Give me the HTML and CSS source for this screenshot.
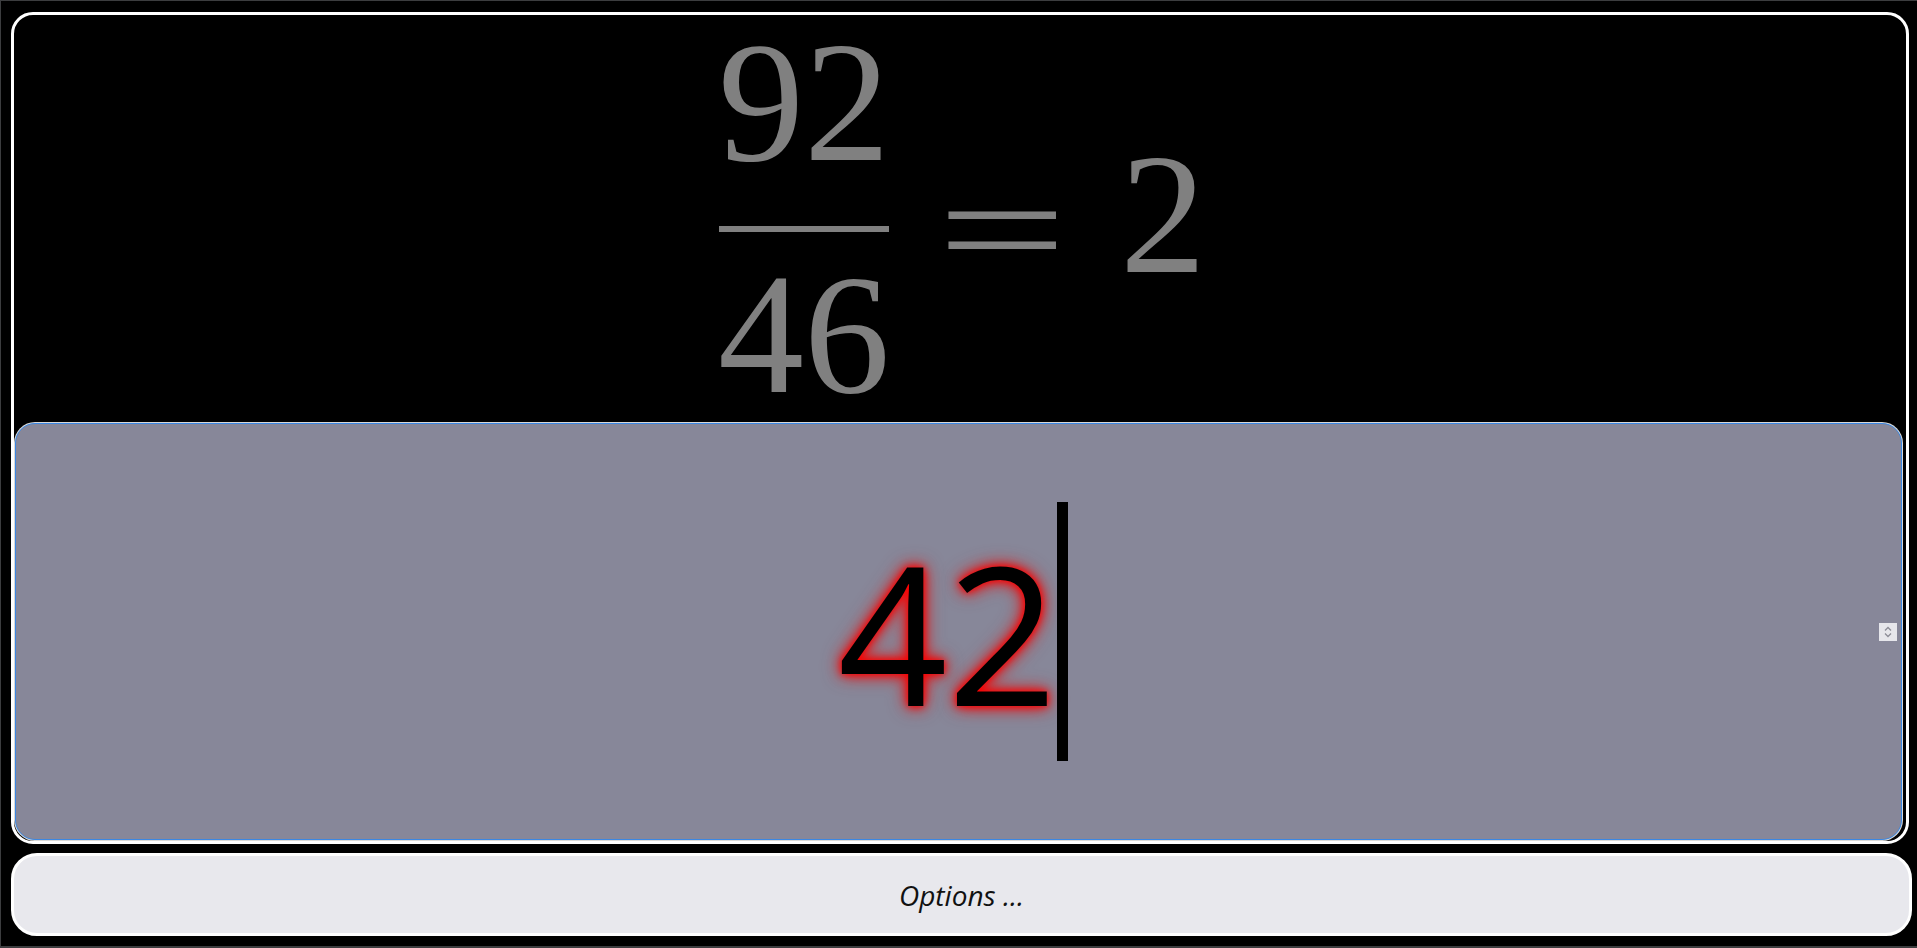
FILE: index.html
```html
<!DOCTYPE html>
<html lang="en">
<head>
<meta charset="utf-8">
<title>Fraction trainer</title>
<link rel="stylesheet" href="styles.css">
</head>
<body>
<div class="app">
  <div class="panel">
    <div class="math">
      <div class="frac">
        <div class="num">92</div>
        <div class="bar"></div>
        <div class="den">46</div>
      </div>
      <div class="rel"><span class="eq">=</span><span class="rhs">2</span></div>
    </div>
    <div class="answer">
      <div class="answer-text"><span class="value">42</span><span class="caret"></span></div>
      <div class="spin">
        <svg width="18" height="18" viewBox="0 0 18 18"><path d="M6 7.5 L9 4.5 L12 7.5 M6 10.5 L9 13.5 L12 10.5" fill="none" stroke="#8c8c96" stroke-width="1.3"/></svg>
      </div>
    </div>
  </div>
  <button class="options">Options ...</button>
</div>
</body>
</html>
```
FILE: styles.css
```css
html, body {
  margin: 0;
  height: 100%;
  background: #000;
}

.app {
  box-sizing: border-box;
  height: 948px;
  border-top: 1px solid #3c3d3f;
  border-left: 1px solid #3c3d3f;
  border-bottom: 2px solid #3c3d3f;
  padding: 11px 8px 10px 10px;
  display: flex;
  flex-direction: column;
  gap: 9px;
}

.panel {
  box-sizing: border-box;
  height: 832px;
  border: 3px solid #fff;
  border-radius: 22px;
  display: flex;
  flex-direction: column;
}

.math {
  box-sizing: border-box;
  height: 408px;
  padding: 1px 0 0 705px;
  display: flex;
  justify-content: flex-start;
  align-items: flex-start;
  color: #808080;
  font-family: "Liberation Serif", serif;
  font-size: 172px;
  line-height: 172px;
}

.frac {
  display: flex;
  flex-direction: column;
  align-items: center;
  width: 170px;
}

.num, .den {
  height: 172px;
}

.bar {
  width: 170px;
  height: 6px;
  background: #808080;
  margin: 38px 0 16px;
}

.rel {
  display: flex;
  align-items: flex-start;
}

.eq {
  display: inline-block;
  font-size: 150px;
  line-height: 150px;
  margin-top: 138px;
  transform: scaleX(1.54);
  transform-origin: left center;
  margin-left: 48px;
  width: 84px;
}

.rhs {
  margin-top: 112px;
  margin-left: 99px;
}

.answer {
  flex: 1;
  margin: 0 4px 1px 1px;
  border: 1px solid #3b87e2;
  box-shadow: 0 0 0 1px rgba(255, 255, 255, 0.85);
  border-radius: 20px;
  background: #878799;
  display: flex;
  align-items: center;
  padding-right: 4px;
}

.answer-text {
  flex: 1;
  display: flex;
  justify-content: center;
  align-items: center;
}

.value {
  font-family: "Open Sans", sans-serif;
  font-size: 192px;
  color: #000;
  text-shadow: 0 0 7px #ff0000, 0 0 14px rgba(240, 0, 0, 0.95), 0 0 20px rgba(225, 20, 20, 0.75);
}

.caret {
  width: 11px;
  height: 259px;
  background: #000;
  margin-right: -11px;
}

.spin {
  width: 18px;
  height: 18px;
  background: #e6e6eb;
  display: flex;
}

.options {
  box-sizing: border-box;
  height: 83px;
  margin-right: -3px;
  border: 3px solid #fff;
  border-radius: 26px;
  background: #e8e8ed;
  font-family: "Open Sans", sans-serif;
  font-style: italic;
  font-size: 28px;
  color: #111;
  padding: 0;
}
```
